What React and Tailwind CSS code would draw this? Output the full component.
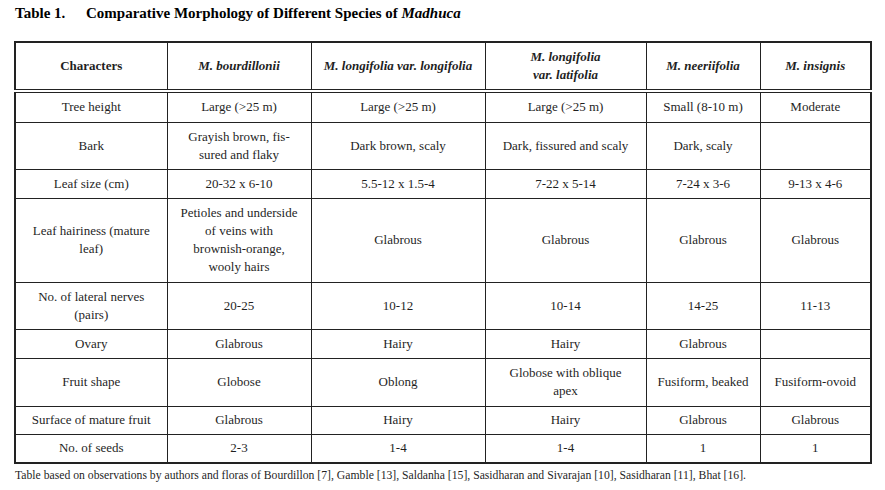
import React from "react";

const species = [
  { name: "M. bourdillonii" },
  { name: "M. longifolia var. longifolia" },
  { name: "M. longifolia", sub: "var. latifolia" },
  { name: "M. neeriifolia" },
  { name: "M. insignis" },
];

const rows = [
  { h: "h-[31px]", label: ["Tree height"], cells: [["Large (>25 m)"], ["Large (>25 m)"], ["Large (>25 m)"], ["Small (8-10 m)"], ["Moderate"]] },
  { h: "h-[47px]", label: ["Bark"], cells: [["Grayish brown, fis-", "sured and flaky"], ["Dark brown, scaly"], ["Dark, fissured and scaly"], ["Dark, scaly"], [""]] },
  { h: "h-[29px]", label: ["Leaf size (cm)"], cells: [["20-32 x 6-10"], ["5.5-12 x 1.5-4"], ["7-22 x 5-14"], ["7-24 x 3-6"], ["9-13 x 4-6"]] },
  {
    h: "h-[84px]",
    label: ["Leaf hairiness (mature", "leaf)"],
    cells: [["Petioles and underside", "of veins with", "brownish-orange,", "wooly hairs"], ["Glabrous"], ["Glabrous"], ["Glabrous"], ["Glabrous"]],
  },
  { h: "h-[47px]", label: ["No. of lateral nerves", "(pairs)"], cells: [["20-25"], ["10-12"], ["10-14"], ["14-25"], ["11-13"]] },
  { h: "h-[29px]", label: ["Ovary"], cells: [["Glabrous"], ["Hairy"], ["Hairy"], ["Glabrous"], [""]] },
  { h: "h-[48px]", label: ["Fruit shape"], cells: [["Globose"], ["Oblong"], ["Globose with oblique", "apex"], ["Fusiform, beaked"], ["Fusiform-ovoid"]] },
  { h: "h-[28px]", label: ["Surface of mature fruit"], cells: [["Glabrous"], ["Hairy"], ["Hairy"], ["Glabrous"], ["Glabrous"]] },
  { h: "h-[29px]", label: ["No. of seeds"], cells: [["2-3"], ["1-4"], ["1-4"], ["1"], ["1"]] },
];

const Lines = ({ lines }) =>
  lines.map((t, i) => (
    <React.Fragment key={i}>
      {i > 0 && <br />}
      {t}
    </React.Fragment>
  ));

export default function App() {
  return (
    <div className="min-h-screen w-[885px] h-[490px] bg-white font-[Liberation_Serif,serif] text-[#1f1f1f]">
      <div className="pl-[15px] pt-[3px]">
        {/* title */}
        <h1 className="flex text-[15px] leading-[20px] font-bold text-black">
          <span className="w-[71px]">Table 1.</span>
          <span>
            Comparative Morphology of Different Species of <i>Madhuca</i>
          </span>
        </h1>
      </div>

      <div className="pl-[14px] pt-[18px]">
        <table className="table-fixed border-collapse w-[856px] border-2 border-[#222] text-[13px] leading-[18px] text-center">
          <colgroup>
            <col className="w-[152px]" />
            <col className="w-[144px]" />
            <col className="w-[174px]" />
            <col className="w-[161px]" />
            <col className="w-[114px]" />
            <col className="w-[111px]" />
          </colgroup>
          <thead>
            <tr className="h-[49px] border-b-4 border-double border-[#222]">
              <th className="border border-[#222] font-bold px-1">Characters</th>
              {species.map((s) => (
                <th key={s.name} className="border border-[#222] font-bold italic px-1">
                  {s.name}
                  {s.sub && (
                    <>
                      <br />
                      {s.sub}
                    </>
                  )}
                </th>
              ))}
            </tr>
          </thead>
          <tbody>
            {rows.map((r, i) => (
              <tr key={i} className={r.h}>
                <td className="border border-[#222] px-1">
                  <Lines lines={r.label} />
                </td>
                {r.cells.map((c, j) => (
                  <td key={j} className="border border-[#222] px-1">
                    <Lines lines={c} />
                  </td>
                ))}
              </tr>
            ))}
          </tbody>
        </table>
      </div>

      {/* footnote */}
      <p className="pl-[15px] pt-[3px] text-[11.7px] leading-[18px]">
        Table based on observations by authors and floras of Bourdillon [7], Gamble [13], Saldanha [15], Sasidharan and Sivarajan [10], Sasidharan [11], Bhat [16].
      </p>
    </div>
  );
}
